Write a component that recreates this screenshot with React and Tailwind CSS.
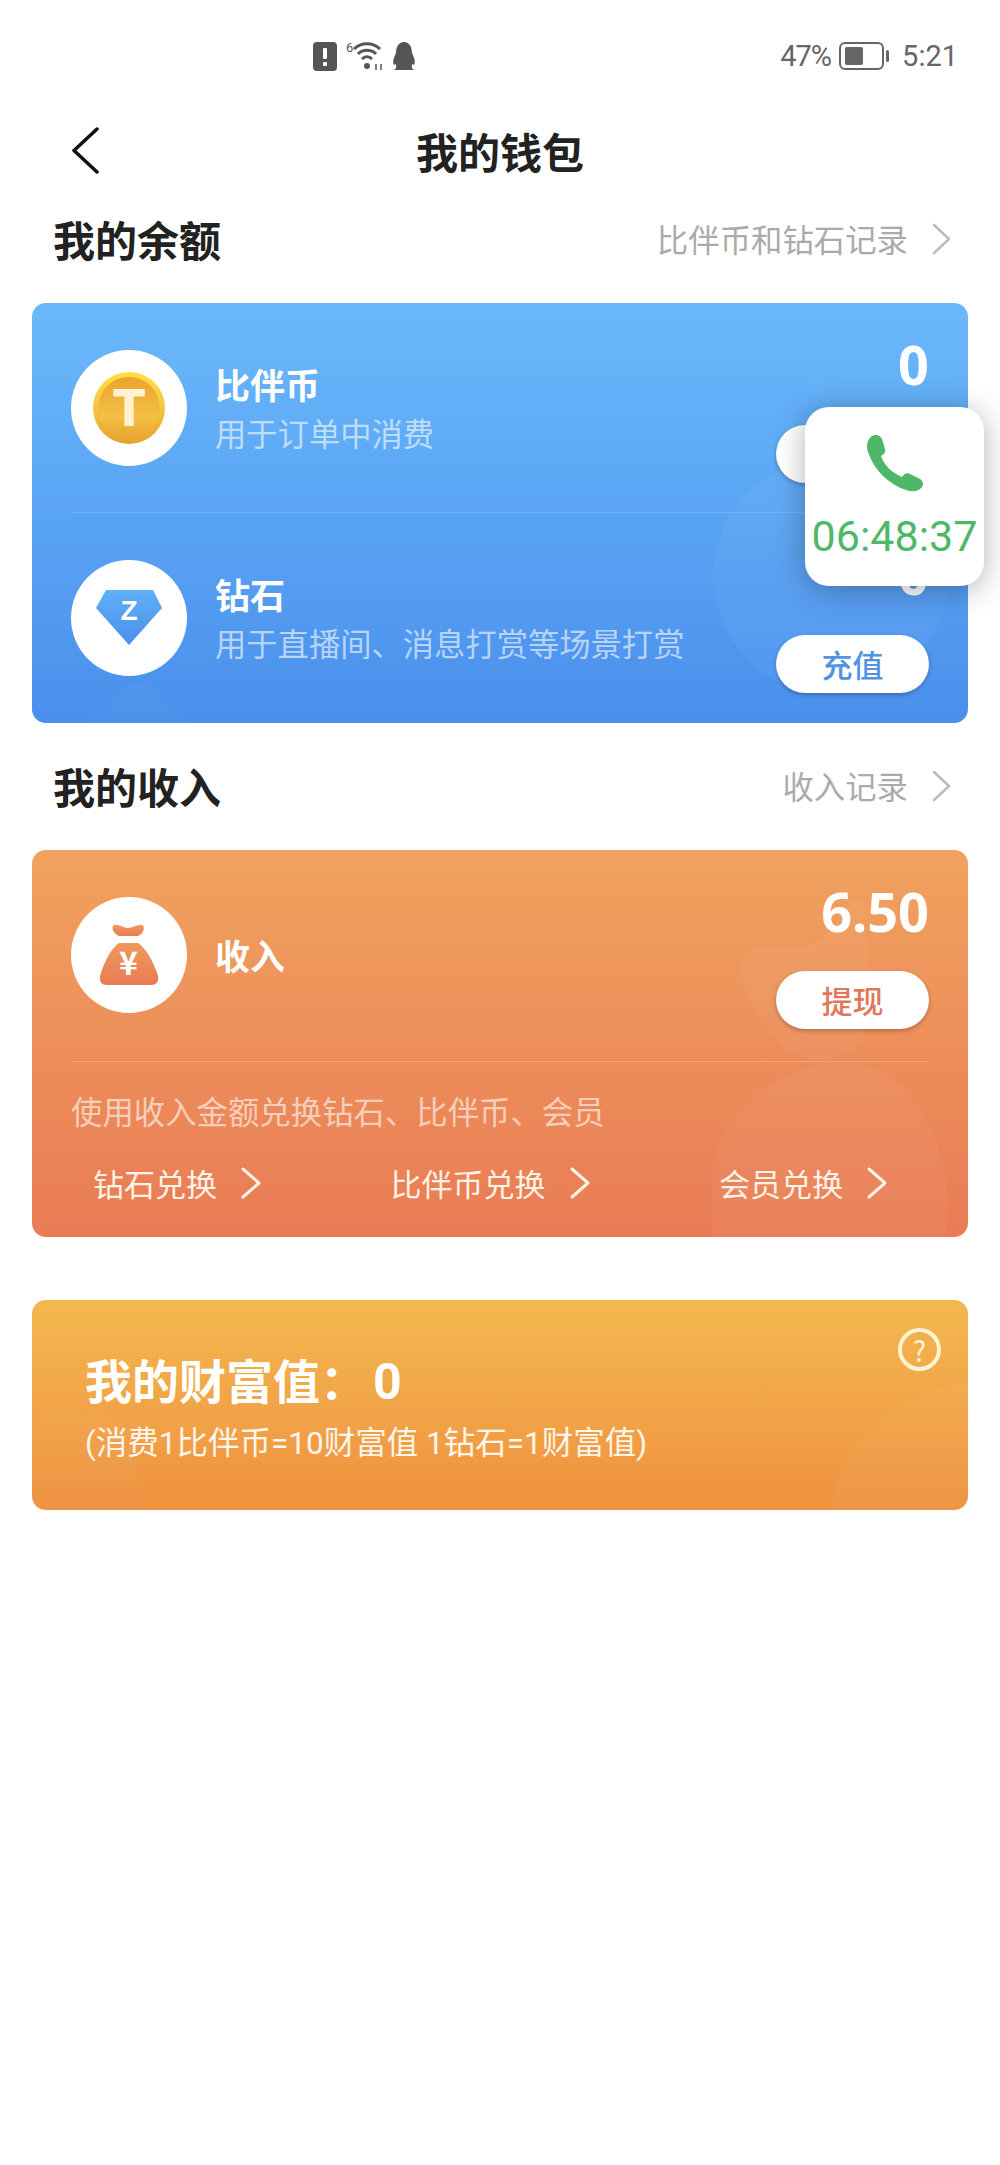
function Chevron({ w, h, stroke, className, dir = "right" }) {
  const points = dir === "right" ? `2,2 ${w - 2},${h / 2} 2,${h - 2}` : `${w - 2},2 2,${h / 2} ${w - 2},${h - 2}`;
  return (
    <svg width={w} height={h} viewBox={`0 0 ${w} ${h}`} className={className}>
      <polyline points={points} fill="none" stroke="currentColor" strokeWidth={stroke} strokeLinecap="round" strokeLinejoin="round" />
    </svg>
  );
}

function CoinIcon() {
  return (
    <svg width="76" height="76" viewBox="0 0 76 76">
      <defs>
        <linearGradient id="coinRim" x1="0" y1="0" x2="0" y2="1">
          <stop offset="0" stopColor="#ffe13a" />
          <stop offset="0.5" stopColor="#f4c640" />
          <stop offset="1" stopColor="#e4a22d" />
        </linearGradient>
        <linearGradient id="coinFace" x1="0" y1="0" x2="0" y2="1">
          <stop offset="0" stopColor="#eca22f" />
          <stop offset="0.65" stopColor="#f3c045" />
          <stop offset="1" stopColor="#e9a433" />
        </linearGradient>
      </defs>
      <circle cx="38" cy="38" r="36" fill="url(#coinRim)" />
      <circle cx="38" cy="38" r="31" fill="url(#coinFace)" />
      <text x="38" y="55" textAnchor="middle" fontSize="50" fontWeight="700" fill="#fff3cf" stroke="#fff3cf" strokeWidth="2" fontFamily="Liberation Sans">T</text>
    </svg>
  );
}

function DiamondIcon() {
  return (
    <svg width="66" height="56" viewBox="0 0 66 56">
      <defs>
        <linearGradient id="gem" x1="0" y1="0" x2="0" y2="1">
          <stop offset="0" stopColor="#5fb0f7" />
          <stop offset="1" stopColor="#4a8fe9" />
        </linearGradient>
      </defs>
      <path d="M10 0H57L66 18L33 55L0 18Z" fill="url(#gem)" />
      <text x="33" y="30" textAnchor="middle" fontSize="28" fontWeight="700" fill="#fff" fontFamily="Liberation Sans">Z</text>
    </svg>
  );
}

function BagIcon() {
  return (
    <svg width="60" height="62" viewBox="0 0 60 62">
      <defs>
        <linearGradient id="bag" x1="0" y1="0" x2="0" y2="1">
          <stop offset="0" stopColor="#ef9a5c" />
          <stop offset="1" stopColor="#e97b54" />
        </linearGradient>
      </defs>
      <path d="M15 1C20 0 24 4 29 4C34 4 39 0 43 1C47 3 44 10 39 12H20C15 10 11 3 15 1Z" fill="url(#bag)" />
      <path d="M20 19H39C46 23 55 38 59 52C60 58 57 61 52 61H8C3 61 0 58 1 52C5 38 13 23 20 19Z" fill="url(#bag)" />
      <text x="29.5" y="51" textAnchor="middle" fontSize="32" fontWeight="700" fill="#fff" fontFamily="Noto Sans CJK SC">¥</text>
    </svg>
  );
}

function Avatar({ children }) {
  return (
    <div className="w-[116px] h-[116px] rounded-full bg-white flex items-center justify-center shrink-0">
      {children}
    </div>
  );
}

function PillButton({ label, color }) {
  return (
    <div className={`w-[153px] h-[58px] rounded-full bg-white flex items-center justify-center text-[31px] font-medium shadow-[0_2px_4px_rgba(0,0,0,0.25)] ${color}`}>
      {label}
    </div>
  );
}

function SectionHead({ title, link }) {
  return (
    <div className="flex items-center justify-between pl-[53px] pr-[49px]">
      <h2 className="text-[42px] leading-[60px] font-bold text-[#222]">{title}</h2>
      <div className="flex items-center text-[31.4px] text-[#aaa]">
        {link}
        <Chevron w={19} h={32} stroke={2.5} className="ml-[24px] text-[#bbb]" />
      </div>
    </div>
  );
}

function ExchangeLink({ label }) {
  return (
    <div className="flex items-center text-[31px] leading-[44px] text-[#fff3e6]">
      {label}
      <Chevron w={20} h={32} stroke={3} className="ml-[24px]" />
    </div>
  );
}

function BalanceRow({ icon, title, desc, amount, action }) {
  return (
    <div className="flex items-start h-[209px] px-[39px]">
      <div className="flex items-center mt-[47px]">
        <Avatar>{icon}</Avatar>
        <div className="ml-[28px]">
          <div className="text-[35px] leading-[48px] font-bold text-white">{title}</div>
          <div className="mt-[2px] text-[31.3px] leading-[46px] text-white/60">{desc}</div>
        </div>
      </div>
      <div className="ml-auto flex flex-col items-end mt-[24px]">
        <div className="font-['Noto_Sans',sans-serif] text-[54px] leading-[74px] font-bold text-white">{amount}</div>
        <div className="mt-[24px]">
          <PillButton label={action} color="text-[#4a8fe0]" />
        </div>
      </div>
    </div>
  );
}

export default function App() {
  return (
    <div className="relative w-[1000px] h-[2165px] bg-white overflow-hidden font-['Noto_Sans_CJK_SC',sans-serif]">
      {/* status bar */}
      <div className="relative h-[113px]">
        <div className="flex items-center h-[30px] pt-[41px] pl-[313px] pr-[42px] box-content text-[#555]">
          <svg width="24" height="29" viewBox="0 0 24 29">
            <rect width="24" height="29" rx="4" fill="#555" />
            <rect x="10" y="6" width="4" height="11" rx="1" fill="#fff" />
            <rect x="10" y="20" width="4" height="4" rx="1" fill="#fff" />
          </svg>
          <svg width="38" height="30" viewBox="0 0 38 30" className="ml-[9px] overflow-visible" fill="none" stroke="#555" strokeWidth="3">
            <text x="0" y="11" fontSize="13" fill="#555" stroke="none" fontFamily="Roboto">6</text>
            <path d="M8 8C15 1 27 1 34 8" />
            <path d="M12 13C17 8 25 8 30 13" />
            <path d="M16 18C19 15 23 15 26 18" />
            <circle cx="21" cy="25" r="3" fill="#555" stroke="none" />
            <path d="M30 23v6M35 23v6" strokeWidth="1.5" />
          </svg>
          <svg width="24" height="29" viewBox="0 0 24 29" className="ml-[8px]">
            <path d="M12 0C18 0 20 6 20 11C22 15 24 20 22 23L20 22C20 25 19 26 22 28H2C5 26 4 25 4 22L2 23C0 20 2 15 4 11C4 6 6 0 12 0Z" fill="#555" />
          </svg>
          <div className="ml-auto flex items-center font-['Roboto',sans-serif] text-[29px] leading-[30px] text-[#666]">
            <span className="tracking-[-1px]">47%</span>
            <svg width="51" height="28" viewBox="0 0 51 28" className="ml-[8px]">
              <rect x="1" y="1" width="43" height="26" rx="5" fill="none" stroke="#666" strokeWidth="2" />
              <rect x="6" y="5" width="18" height="18" rx="2" fill="#666" />
              <rect x="47" y="8" width="3" height="12" rx="1.5" fill="#666" />
            </svg>
            <span className="ml-[12px]">5:21</span>
          </div>
        </div>
      </div>

      {/* header */}
      <div className="relative h-[78px] flex items-center justify-center">
        <Chevron w={27} h={47} stroke={3.5} dir="left" className="absolute left-[72px] top-[14px] text-[#111]" />
        <h1 className="text-[42px] leading-[60px] font-bold text-[#222] -mt-[2px]">我的钱包</h1>
      </div>

      <div className="mt-[18px]">
        <SectionHead title="我的余额" link="比伴币和钻石记录" />
      </div>

      {/* balance card */}
      <div className="relative mx-[32px] mt-[34px] h-[420px] rounded-[14px] overflow-hidden bg-gradient-to-b from-[#6bb9fb] to-[#4a8fec]">
        <div className="absolute left-[681px] top-[155px] w-[236px] h-[236px] rounded-full bg-white/[0.04]" />
        <svg className="absolute left-[55px] bottom-0" width="100" height="42" viewBox="0 0 100 42">
          <path d="M0 42L40 4L60 0L100 42Z" fill="#fff" fillOpacity="0.025" />
        </svg>
        <BalanceRow icon={<CoinIcon />} title="比伴币" desc="用于订单中消费" amount="0" action="充值" />
        <div className="mx-[39px] h-px bg-white/15" />
        <BalanceRow icon={<DiamondIcon />} title="钻石" desc="用于直播间、消息打赏等场景打赏" amount="0" action="充值" />
      </div>

      <div className="mt-[33px]">
        <SectionHead title="我的收入" link="收入记录" />
      </div>

      {/* income card */}
      <div className="relative mx-[32px] mt-[34px] h-[387px] rounded-[14px] overflow-hidden bg-gradient-to-b from-[#f0a25f] to-[#e97b55]">
        <svg className="absolute left-[680px] top-[45px]" width="256" height="342" viewBox="0 0 256 342">
          <path d="M70 55C95 55 115 45 125 25C135 5 148 0 152 10C156 60 158 110 150 145C125 175 85 170 60 140C35 110 15 60 40 55C50 53 60 55 70 55Z" fill="#fff" fillOpacity="0.045" />
          <path d="M0 342V270C10 220 60 170 130 168C190 166 230 230 236 300L235 342Z" fill="#fff" fillOpacity="0.04" />
        </svg>
        <div className="relative flex items-start h-[211px] px-[39px]">
          <div className="flex items-center mt-[47px]">
            <Avatar><BagIcon /></Avatar>
            <div className="ml-[28px] text-[35px] leading-[48px] font-bold text-white">收入</div>
          </div>
          <div className="ml-auto flex flex-col items-end mt-[24px]">
            <div className="font-['Noto_Sans',sans-serif] text-[54px] leading-[74px] font-bold text-white">6.50</div>
            <div className="mt-[23px]">
              <PillButton label="提现" color="text-[#e0775a]" />
            </div>
          </div>
        </div>
        <div className="relative mx-[39px] h-px bg-white/20" />
        <div className="relative mt-[26px] pl-[39px] text-[31.4px] leading-[46px] text-white/60">使用收入金额兑换钻石、比伴币、会员</div>
        <div className="relative mt-[27px] flex justify-between pl-[61px] pr-[81px]">
          <ExchangeLink label="钻石兑换" />
          <ExchangeLink label="比伴币兑换" />
          <ExchangeLink label="会员兑换" />
        </div>
      </div>

      {/* wealth card */}
      <div className="relative mx-[32px] mt-[63px] h-[210px] rounded-[14px] overflow-hidden bg-gradient-to-b from-[#f3b84f] to-[#ef9140] pl-[53px]">
        <svg className="absolute left-0 top-0" width="936" height="210" viewBox="0 0 936 210">
          <path d="M0 120C30 100 70 110 105 130V210H0Z" fill="#fff" fillOpacity="0.025" />
          <path d="M800 210C800 150 850 100 936 80V210Z" fill="#fff" fillOpacity="0.035" />
        </svg>
        <div className="relative pt-[46px] text-[47px] leading-[66px] font-bold text-white">
          我的财富值：<span className="ml-[6px] font-['Roboto',sans-serif] text-[50px]">0</span>
        </div>
        <div className="relative mt-[6px] font-['Roboto','Noto_Sans_CJK_SC',sans-serif] text-[31.5px] leading-[46px] text-white/90">(消费1比伴币=10财富值 1钻石=1财富值)</div>
        <div className="absolute right-[27px] top-[28px] w-[43px] h-[43px] rounded-full border-[4px] border-[#fff3d6] flex items-center justify-center text-[28px] leading-none text-[#fff3d6]">?</div>
      </div>

      {/* floating call widget */}
      <div className="absolute left-[805px] top-[407px] w-[179px] h-[179px] rounded-[24px] bg-white shadow-[0_4px_30px_rgba(0,0,0,0.3)] flex flex-col items-center">
        <svg width="58" height="58" viewBox="0 0 58 58" className="mt-[27px]">
          <path d="M6 2C10 0 14 1 16 5L19 15C20 18 18 20 15 22C18 31 26 39 36 43C38 40 41 38 44 40L54 45C57 47 58 50 56 53C52 58 46 58 40 56C22 50 8 36 2 18C0 12 1 6 6 2Z" fill="#4fb868" />
        </svg>
        <div className="mt-[19px] font-['Roboto',sans-serif] text-[43px] leading-[50px] text-[#4fb868] whitespace-nowrap">06:48:37</div>
      </div>
    </div>
  );
}
